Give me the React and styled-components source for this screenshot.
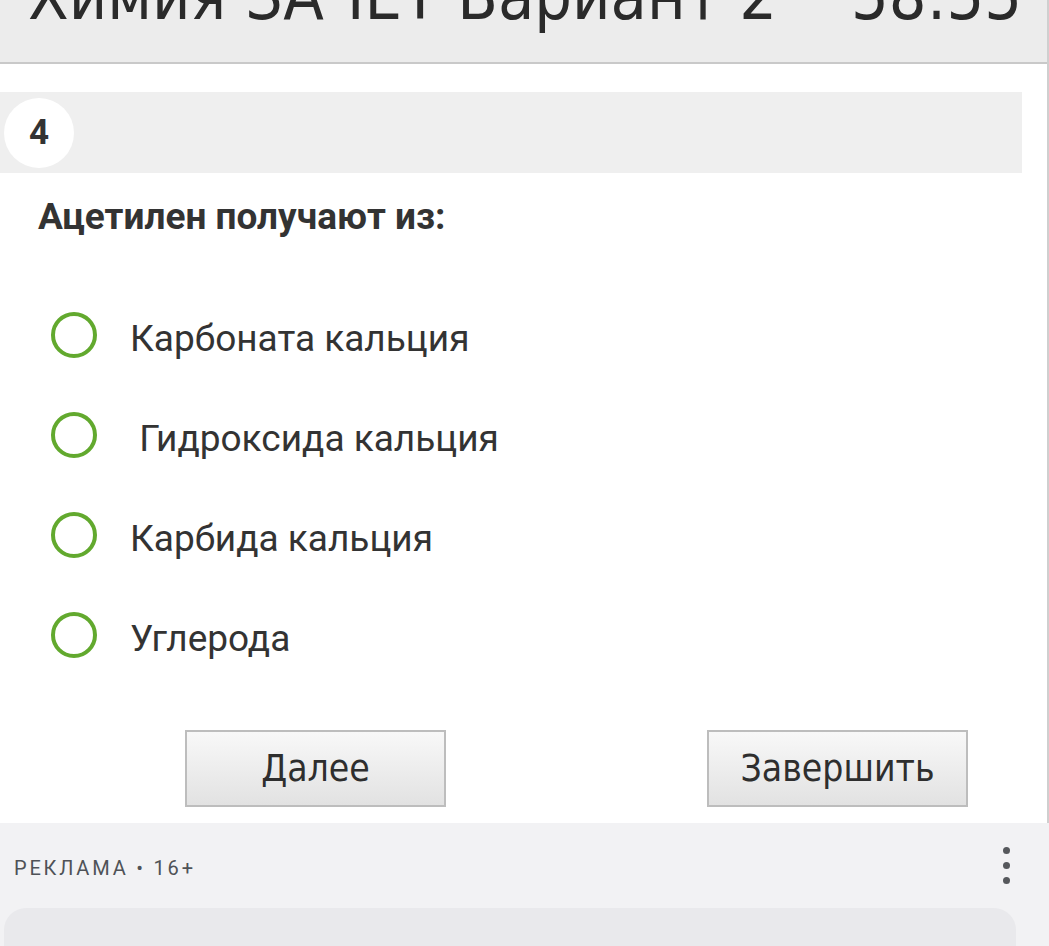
import React from 'react';
import styled, { createGlobalStyle } from 'styled-components';

const GlobalStyle = createGlobalStyle`
  html, body {
    margin: 0;
    padding: 0;
    background: #fff;
    overflow: hidden;
  }
  body {
    font-family: Roboto, "Noto Sans", sans-serif;
    color: #333;
  }
`;

const Frame = styled.div`
  width: 1047px;
  border-right: 2px solid #cfcfcf;
  background: #fff;
  padding-bottom: 16px;
`;

const Header = styled.div`
  height: 62px;
  background: #ececec;
  border-bottom: 2px solid #c9c9c9;
  display: flex;
  justify-content: space-between;
  align-items: flex-start;
  padding: 0 25px 0 28px;
  overflow: hidden;
`;

const HeaderText = styled.div`
  font-family: "Liberation Sans Narrow", "DejaVu Sans Condensed", "Liberation Sans", sans-serif;
  font-size: 66px;
  line-height: 66px;
  margin-top: -36px;
  color: #2a2a2a;
  white-space: nowrap;
`;

const NumberBar = styled.div`
  margin-top: 28px;
  width: 1022px;
  height: 81px;
  background: #efefef;
  display: flex;
  align-items: center;
  padding-left: 4px;
  box-sizing: border-box;
`;

const NumberBadge = styled.div`
  width: 70px;
  height: 70px;
  border-radius: 50%;
  background: #fff;
  display: flex;
  align-items: center;
  justify-content: center;
  font-weight: 700;
  font-size: 35px;
  color: #333;
`;

const Question = styled.div`
  padding: 22px 0 0 38px;
  font-weight: 700;
  font-size: 37px;
  line-height: 44px;
  color: #333;
`;

const Options = styled.div`
  margin-top: 73px;
  display: flex;
  flex-direction: column;
  gap: 54px;
  padding-left: 51px;
`;

const Option = styled.label`
  display: flex;
  align-items: center;
  height: 46px;
  font-size: 37px;
  color: #333;
  white-space: pre;
`;

const OptionText = styled.span`
  padding-top: 6px;
`;

const Radio = styled.span`
  width: 46px;
  height: 46px;
  box-sizing: border-box;
  border: 4px solid #62a92e;
  border-radius: 50%;
  margin-right: 33px;
  flex-shrink: 0;
`;

const Buttons = styled.div`
  display: flex;
  gap: 261px;
  padding-left: 185px;
  margin-top: 72px;
`;

const Button = styled.button`
  width: 261px;
  height: 77px;
  border: 2px solid #bdbdbd;
  background: linear-gradient(#f8f8f8, #e2e2e2);
  font-family: "Liberation Sans Narrow", "DejaVu Sans Condensed", "Liberation Sans", sans-serif;
  font-size: 37px;
  color: #2e2e2e;
  padding: 0;
  cursor: pointer;
`;

const Ad = styled.div`
  background: #f2f2f4;
  padding: 30px 39px 0 4px;
  height: 200px;
`;

const AdTop = styled.div`
  display: flex;
  justify-content: space-between;
  align-items: flex-start;
  padding-left: 10px;
`;

const AdLabel = styled.div`
  font-family: Roboto, "Noto Sans", sans-serif;
  font-size: 20px;
  font-weight: 400;
  letter-spacing: 2.8px;
  color: #4f5257;
  margin-top: 3px;
`;

const Dots = styled.div`
  display: flex;
  flex-direction: column;
  gap: 8px;
  margin-top: -6px;
`;

const Dot = styled.span`
  width: 7px;
  height: 7px;
  border-radius: 50%;
  background: #56585c;
`;

const AdBox = styled.div`
  margin-top: 24px;
  width: 1012px;
  height: 120px;
  border-radius: 22px;
  background: #e9e9ec;
`;

const options = ['Карбоната кальция', ' Гидроксида кальция', 'Карбида кальция', 'Углерода'];

export default function App() {
  return (
    <>
      <GlobalStyle />
      <Frame>
        <Header>
          <HeaderText>Химия ЗАЧЕТ Вариант 2</HeaderText>
          <HeaderText>58:55</HeaderText>
        </Header>
        <NumberBar>
          <NumberBadge>4</NumberBadge>
        </NumberBar>
        <Question>Ацетилен получают из:</Question>
        <Options>
          {options.map((o) => (
            <Option key={o}>
              <Radio />
              <OptionText>{o}</OptionText>
            </Option>
          ))}
        </Options>
        <Buttons>
          <Button>Далее</Button>
          <Button>Завершить</Button>
        </Buttons>
      </Frame>
      <Ad>
        <AdTop>
          <AdLabel>РЕКЛАМА • 16+</AdLabel>
          <Dots>
            <Dot />
            <Dot />
            <Dot />
          </Dots>
        </AdTop>
        <AdBox />
      </Ad>
    </>
  );
}
